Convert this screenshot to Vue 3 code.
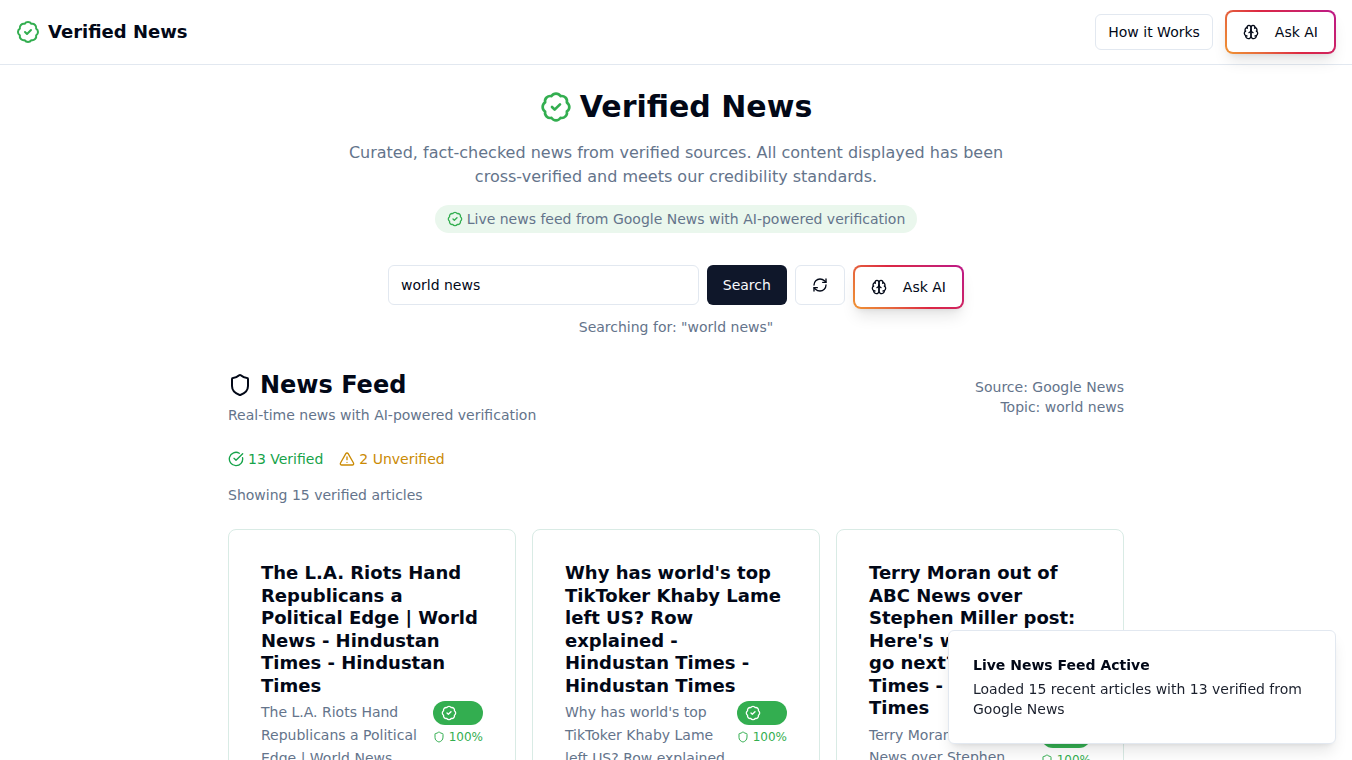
<script setup>
import { h, ref } from 'vue'

const query = ref('world news')
const topic = ref('world news')

const paths = {
  badge: [
    'M3.85 8.62a4 4 0 0 1 4.78-4.77 4 4 0 0 1 6.74 0 4 4 0 0 1 4.78 4.78 4 4 0 0 1 0 6.74 4 4 0 0 1-4.77 4.78 4 4 0 0 1-6.75 0 4 4 0 0 1-4.78-4.77 4 4 0 0 1 0-6.76Z',
    'm9 12 2 2 4-4'
  ],
  brain: [
    'M12 5a3 3 0 1 0-5.997.125 4 4 0 0 0-2.526 5.77 4 4 0 0 0 .556 6.588A4 4 0 1 0 12 18Z',
    'M12 5a3 3 0 1 1 5.997.125 4 4 0 0 1 2.526 5.77 4 4 0 0 1-.556 6.588A4 4 0 1 1 12 18Z',
    'M15 13a4.5 4.5 0 0 1-3-4 4.5 4.5 0 0 1-3 4',
    'M17.599 6.5a3 3 0 0 0 .399-1.375',
    'M6.003 5.125A3 3 0 0 0 6.401 6.5',
    'M3.477 10.896a4 4 0 0 1 .585-.396',
    'M19.938 10.5a4 4 0 0 1 .585.396',
    'M6 18a4 4 0 0 1-1.967-.516',
    'M19.967 17.484A4 4 0 0 1 18 18'
  ],
  refresh: [
    'M3 12a9 9 0 0 1 9-9 9.75 9.75 0 0 1 6.74 2.74L21 8',
    'M21 3v5h-5',
    'M21 12a9 9 0 0 1-9 9 9.75 9.75 0 0 1-6.74-2.74L3 16',
    'M8 16H3v5'
  ],
  shield: [
    'M20 13c0 5-3.5 7.5-7.66 8.95a1 1 0 0 1-.67-.01C7.5 20.5 4 18 4 13V6a1 1 0 0 1 1-1c2 0 4.5-1.2 6.24-2.72a1.17 1.17 0 0 1 1.52 0C14.51 3.81 17 5 19 5a1 1 0 0 1 1 1z'
  ],
  check: ['M21.8 10A10 10 0 1 1 17 3.335', 'm9 11 3 3L22 4'],
  warning: [
    'm21.73 18-8-14a2 2 0 0 0-3.48 0l-8 14A2 2 0 0 0 4 21h16a2 2 0 0 0 1.73-3',
    'M12 9v4',
    'M12 17h.01'
  ]
}

const Icon = (props) =>
  h(
    'svg',
    {
      width: props.size,
      height: props.size,
      viewBox: '0 0 24 24',
      fill: 'none',
      stroke: 'currentColor',
      'stroke-width': 2,
      'stroke-linecap': 'round',
      'stroke-linejoin': 'round',
      'aria-hidden': 'true'
    },
    paths[props.name].map((d) => h('path', { d }))
  )
Icon.props = { name: String, size: { type: Number, default: 16 } }

const articles = [
  {
    title: 'The L.A. Riots Hand Republicans a Political Edge | World News - Hindustan Times - Hindustan Times',
    text: 'The L.A. Riots Hand Republicans a Political Edge | World News Hindustan Times'
  },
  {
    title: "Why has world's top TikToker Khaby Lame left US? Row explained - Hindustan Times - Hindustan Times",
    text: "Why has world's top TikToker Khaby Lame left US? Row explained Hindustan Times"
  },
  {
    title: "Terry Moran out of ABC News over Stephen Miller post: Here's where he may go next? - Hindustan Times - Hindustan Times",
    text: 'Terry Moran out of ABC News over Stephen Miller post Hindustan Times'
  }
]
</script>

<template>
  <div class="page">
    <header class="header">
      <a class="brand" href="#"><Icon class="green" name="badge" :size="24" />Verified News</a>
      <nav class="actions">
        <button type="button" class="btn small">How it Works</button>
        <button type="button" class="ask"><Icon name="brain" />Ask AI</button>
      </nav>
    </header>

    <main class="main">
      <section class="hero">
        <h1><Icon class="green" name="badge" :size="32" />Verified News</h1>
        <p class="intro">
          Curated, fact-checked news from verified sources. All content displayed has been cross-verified and meets our credibility standards.
        </p>
        <p class="pill"><Icon class="green" name="badge" />Live news feed from Google News with AI-powered verification</p>
      </section>

      <form class="search" @submit.prevent="topic = query">
        <input v-model="query" type="text" aria-label="Search news" />
        <button type="submit" class="btn primary">Search</button>
        <button type="button" class="btn" aria-label="Refresh"><Icon name="refresh" /></button>
        <button type="button" class="ask"><Icon name="brain" />Ask AI</button>
      </form>
      <p class="searching">Searching for: "{{ topic }}"</p>

      <section class="feed">
        <div class="feed-head">
          <div>
            <h2><Icon name="shield" :size="24" />News Feed</h2>
            <p class="sub">Real-time news with AI-powered verification</p>
          </div>
          <div class="source">
            <p>Source: Google News</p>
            <p>Topic: {{ topic }}</p>
          </div>
        </div>
        <div class="counts">
          <span class="verified"><Icon name="check" />13 Verified</span>
          <span class="unverified"><Icon name="warning" />2 Unverified</span>
        </div>
        <p class="showing">Showing 15 verified articles</p>
        <div class="grid">
          <article v-for="a in articles" :key="a.title" class="card">
            <h3>{{ a.title }}</h3>
            <div class="card-row">
              <p class="excerpt">{{ a.text }}</p>
              <div class="score">
                <span class="badge"><Icon name="badge" /></span>
                <span class="percent"><Icon name="shield" :size="12" />100%</span>
              </div>
            </div>
          </article>
        </div>
      </section>
    </main>

    <div class="toast" role="status">
      <strong>Live News Feed Active</strong>
      <p>Loaded 15 recent articles with 13 verified from Google News</p>
    </div>
  </div>
</template>

<style>
body {
  margin: 0;
  background: #fff;
}
</style>

<style scoped>
* {
  box-sizing: border-box;
}
.page {
  height: 100vh;
  overflow: hidden;
  font-family: "DejaVu Sans", sans-serif;
  font-size: 14px;
  line-height: 20px;
  color: #020817;
}
h1, h2, h3, p {
  margin: 0;
}
svg {
  display: block;
  flex-shrink: 0;
}
button, input {
  font: inherit;
  color: inherit;
}
.green {
  color: #33ae50;
}
.header {
  display: flex;
  align-items: center;
  justify-content: space-between;
  height: 65px;
  padding: 0 16px;
  border-bottom: 1px solid #e2e8f0;
}
.brand {
  display: flex;
  align-items: center;
  gap: 8px;
  font-size: 18px;
  line-height: 28px;
  font-weight: 700;
  color: inherit;
  text-decoration: none;
}
.actions {
  display: flex;
  align-items: center;
  gap: 12px;
}
.btn {
  display: flex;
  align-items: center;
  justify-content: center;
  height: 40px;
  padding: 0 16px;
  border: 1px solid #e2e8f0;
  border-radius: 6px;
  background: #fff;
}
.small {
  height: 36px;
  padding: 0 12px;
}
.primary {
  border: 0;
  background: #0f172a;
  color: #f8fafc;
}
.ask {
  display: flex;
  align-items: center;
  gap: 16px;
  height: 44px;
  padding: 0 16px;
  border: 2px solid transparent;
  border-radius: 8px;
  background:
    linear-gradient(#fff, #fff) padding-box,
    linear-gradient(45deg, #f09433 0%, #e6683c 25%, #dc2743 50%, #cc2366 75%, #bc1888 100%) border-box;
  box-shadow: 0 10px 15px -3px rgb(0 0 0 / 10%), 0 4px 6px -4px rgb(0 0 0 / 10%);
}
.main {
  padding: 24px 16px;
}
.hero {
  display: flex;
  flex-direction: column;
  align-items: center;
  gap: 16px;
  text-align: center;
}
h1 {
  display: flex;
  align-items: center;
  gap: 8px;
  font-size: 30px;
  line-height: 36px;
}
.intro {
  max-width: 672px;
  font-size: 16px;
  line-height: 24px;
  color: #64748b;
}
.pill {
  display: flex;
  align-items: center;
  gap: 4px;
  padding: 4px 12px;
  border-radius: 14px;
  background: #eaf7ed;
  color: #64748b;
}
.search {
  display: flex;
  align-items: flex-start;
  gap: 8px;
  max-width: 576px;
  margin: 32px auto 8px;
}
.search input {
  flex: 1;
  min-width: 0;
  height: 40px;
  padding: 0 12px;
  border: 1px solid #e2e8f0;
  border-radius: 6px;
  background: #fff;
  outline: none;
}
.searching {
  text-align: center;
  color: #64748b;
}
.feed {
  max-width: 896px;
  margin: 32px auto 0;
}
.feed-head {
  display: flex;
  align-items: center;
  justify-content: space-between;
}
h2 {
  display: flex;
  align-items: center;
  gap: 8px;
  font-size: 24px;
  line-height: 32px;
}
.sub {
  margin-top: 4px;
  color: #64748b;
}
.source {
  text-align: right;
  color: #64748b;
}
.counts {
  display: flex;
  gap: 16px;
  margin: 24px 0 16px;
}
.counts span {
  display: flex;
  align-items: center;
  gap: 4px;
}
.verified {
  color: #16a34a;
}
.unverified {
  color: #ca8a04;
}
.showing {
  color: #64748b;
}
.grid {
  display: grid;
  grid-template-columns: repeat(3, 1fr);
  gap: 16px;
  margin-top: 24px;
}
.card {
  padding: 32px;
  border: 1px solid #d9ebe5;
  border-radius: 8px;
  background: #fff;
}
h3 {
  font-size: 18px;
  line-height: 1.25;
}
.card-row {
  display: flex;
  align-items: flex-start;
  gap: 8px;
  margin-top: 4px;
}
.excerpt {
  flex: 1;
  line-height: 1.625;
  color: #64748b;
}
.score {
  display: flex;
  flex-direction: column;
  gap: 4px;
}
.badge {
  display: flex;
  padding: 4px 8px;
  border-radius: 12px;
  background: #33ae50;
  color: #fff;
}
.percent {
  display: flex;
  align-items: center;
  gap: 4px;
  font-size: 12px;
  line-height: 16px;
  color: #33ae50;
}
.toast {
  position: fixed;
  right: 16px;
  bottom: 16px;
  width: 388px;
  max-width: calc(100vw - 32px);
  padding: 24px;
  border: 1px solid #e2e8f0;
  border-radius: 6px;
  background: #fff;
  box-shadow: 0 10px 15px -3px rgb(0 0 0 / 10%), 0 4px 6px -4px rgb(0 0 0 / 10%);
}
.toast strong {
  display: block;
  margin-bottom: 4px;
}
.toast p {
  color: #1b202d;
}
</style>
